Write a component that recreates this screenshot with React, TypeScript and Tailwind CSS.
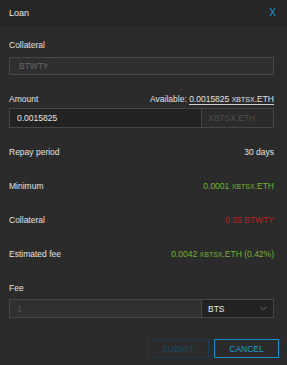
const rows = [
  { label: 'Minimum', value: '0.0001', unit: 'XBTSX', suffix: '.ETH', tone: 'text-[#74b430]' },
  { label: 'Collateral', value: '0.05 BTWTY', unit: '', suffix: '', tone: 'text-[#b8231f]' },
  { label: 'Estimated fee', value: '0.0042', unit: 'XBTSX', suffix: '.ETH (0.42%)', tone: 'text-[#74b430]' },
]

function Asset({ unit, suffix }: { unit: string; suffix: string }) {
  if (!unit) return null
  return (
    <>
      {' '}
      <span className="text-[7px]">{unit}</span>
      {suffix}
    </>
  )
}

export default function App() {
  return (
    <div className="w-[287px] h-[365px] bg-[#2b2b2b] text-[#e2e2e2] text-[8.5px] leading-[10px] font-['Liberation_Sans',Arial,sans-serif] flex flex-col">
      {/* Header */}
      <div className="h-[26px] bg-[#262626] border-b border-[#232323] flex items-center justify-between pl-[9px] pr-[11px]">
        <span className="text-[9px] text-[#ececec]">Loan</span>
        <span className="text-[10px] text-[#1e9ad6]">X</span>
      </div>

      <div className="flex flex-col pl-[9px] pr-[13px]">
        {/* Collateral */}
        <div className="mt-[14px] h-[10px]">Collateral</div>
        <div className="mt-[7px] h-[18px] border border-[#474747] bg-[#2f2f2f] flex items-center px-[9px] text-[#666666]">
          BTWTY
        </div>

        {/* Amount */}
        <div className="mt-[19px] h-[10px] flex justify-between">
          <span>Amount</span>
          <span>
            Available:{' '}
            <span className="border-b border-[#cfcfcf]">
              0.0015825 <span className="text-[7px]">XBTSX</span>.ETH
            </span>
          </span>
        </div>
        <div className="mt-[4px] h-[20px] flex border border-[#464646]">
          <div className="w-[192px] bg-[#222222] border-r border-[#464646] flex items-center px-[7px] text-[#e8e8e8]">
            0.0015825
          </div>
          <div className="flex-1 flex items-center px-[6px] text-[#4f4f4f]">XBTSX.ETH</div>
        </div>

        {/* Repay period */}
        <div className="h-[34px] mt-[7px] flex items-center justify-between">
          <span>Repay period</span>
          <span>30 days</span>
        </div>

        {rows.map((r) => (
          <div key={r.label} className="h-[34px] flex items-center justify-between">
            <span>{r.label}</span>
            <span className={r.tone}>
              {r.value}
              <Asset unit={r.unit} suffix={r.suffix} />
            </span>
          </div>
        ))}

        {/* Fee */}
        <div className="mt-[12px] h-[10px]">Fee</div>
        <div className="mt-[6px] h-[19px] flex border border-[#464646]">
          <div className="w-[192px] bg-[#303030] border-r border-[#464646] flex items-center px-[7px] text-[#555555]">
            1
          </div>
          <div className="flex-1 bg-[#222222] flex items-center justify-between pl-[6px] pr-[6px] text-[#ededed]">
            <span>BTS</span>
            <svg width="7" height="5" viewBox="0 0 7 5" fill="none" stroke="#6e6e6e" strokeWidth="1">
              <path d="M0.5 0.8 L3.5 4 L6.5 0.8" />
            </svg>
          </div>
        </div>
      </div>

      {/* Footer */}
      <div className="mt-[15px] border-t border-[#262626] flex justify-end gap-[5px] pt-[5px] pr-[8px]">
        <button className="w-[62px] h-[19px] border border-[#1b3b4e] text-[#1d4961] text-[8.5px]">SUBMIT</button>
        <button className="w-[65px] h-[19px] border border-[#1a8cc6] text-[#1e9ad6] text-[8.5px]">CANCEL</button>
      </div>
    </div>
  )
}
